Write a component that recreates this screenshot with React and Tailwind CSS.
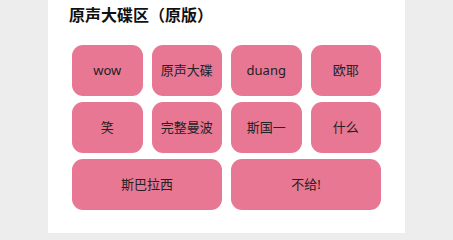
const sounds = ["wow", "原声大碟", "duang", "欧耶", "笑", "完整曼波", "斯国一", "什么"]
const wide = ["斯巴拉西", "不给!"]

export default function App() {
  const btnClass = "h-[51px] rounded-[11px] bg-[#e87794] text-[13px] text-[#222] flex items-center justify-center"

  return (
    <div className="min-h-screen bg-[#ededed] font-['Noto_Sans','Noto_Sans_CJK_SC',sans-serif]">
      <div className="mx-auto w-[357px] min-h-[233px] bg-white">
        <h2 className="pl-[21px] pt-[3px] text-[16px] leading-6 font-bold text-[#111]">原声大碟区（原版）</h2>

        <div className="px-6 pt-[18px]">
          <div className="grid grid-cols-4 gap-x-[9px] gap-y-[6px]">
            {sounds.map(s => (
              <button key={s} className={btnClass}>{s}</button>
            ))}
            {wide.map(s => (
              <button key={s} className={btnClass + " col-span-2"}>{s}</button>
            ))}
          </div>
        </div>
      </div>
    </div>
  )
}
